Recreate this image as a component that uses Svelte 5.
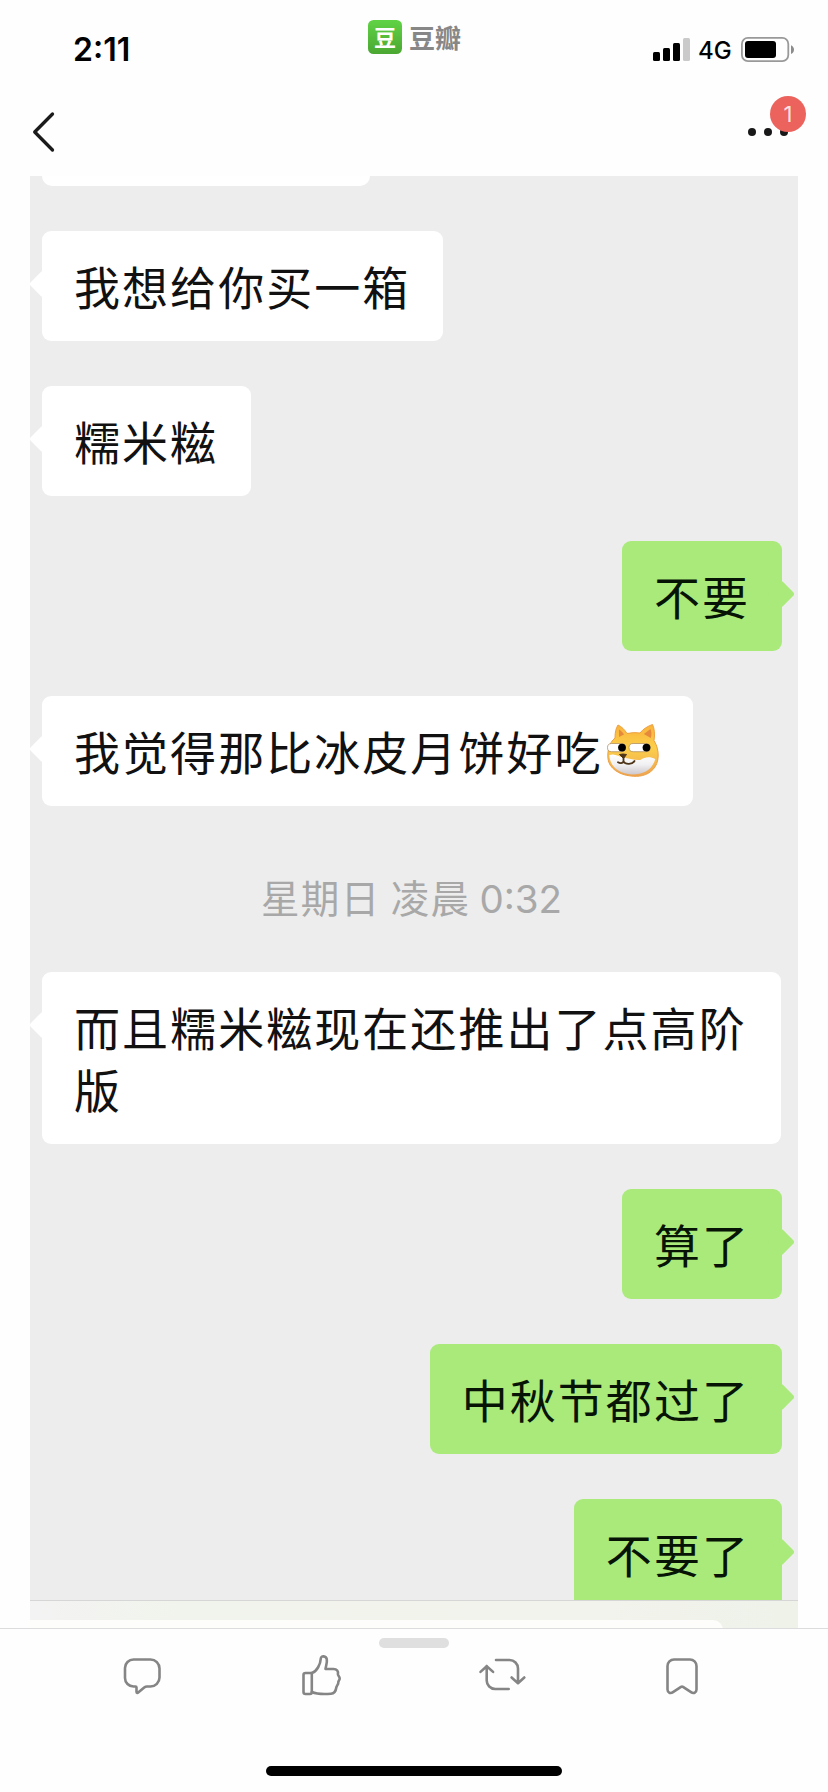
<script>
  const messages = [
    { side: "left", text: "我想给你买一箱" },
    { side: "left", text: "糯米糍" },
    { side: "right", text: "不要" },
    { side: "left", text: "我觉得那比冰皮月饼好吃", doge: true },
    { side: "time", day: "星期日 凌晨", clock: "0:32" },
    { side: "left", text: "而且糯米糍现在还推出了点高阶版" },
    { side: "right", text: "算了" },
    { side: "right", text: "中秋节都过了" },
    { side: "right", text: "不要了" },
  ];

  let unread = 1;
</script>

<div class="screen">
  <!-- Status bar -->
  <header class="status">
    <span class="clock">2:11</span>
    <div class="brand">
      <span class="logo">豆</span>
      <span class="name">豆瓣</span>
    </div>
    <div class="indicators">
      <svg class="signal" width="37" height="23" viewBox="0 0 37 23">
        <rect x="0" y="14" width="7" height="9" rx="1.5" />
        <rect x="10" y="10" width="7" height="13" rx="1.5" />
        <rect x="20" y="5" width="7" height="18" rx="1.5" />
        <rect x="30" y="0" width="7" height="23" rx="1.5" fill="#cacaca" />
      </svg>
      <span class="network">4G</span>
      <svg width="54" height="25" viewBox="0 0 54 25">
        <rect x="0.9" y="0.9" width="46.4" height="23.2" rx="6" fill="none" stroke="#999" stroke-width="1.8" />
        <rect x="4" y="4" width="31" height="17" rx="3" />
        <path d="M50 8.2c4 1.8 4 7 0 8.8z" fill="#8c8c8c" />
      </svg>
    </div>
  </header>

  <!-- Navigation -->
  <nav class="nav">
    <svg width="24" height="42" viewBox="0 0 24 42">
      <path d="M20.5 3 2.7 21l17.8 18" fill="none" stroke="#1b1b1b" stroke-width="3.3" stroke-linecap="round" stroke-linejoin="round" />
    </svg>
    <div class="more">
      <i></i><i></i><i></i>
      <span class="badge">{unread}</span>
    </div>
  </nav>

  <!-- Chat -->
  <main class="chat">
    <div class="messages">
      <div class="previous"></div>
      {#each messages as message}
        {#if message.side === "time"}
          <p class="time">{message.day}<span>{message.clock}</span></p>
        {:else}
          <div class="bubble {message.side}">
            {message.text}{#if message.doge}<svg class="doge" width="54" height="56" viewBox="0 0 54 56">
                <defs>
                  <linearGradient id="fur" x1="0" y1="0" x2="0" y2="1">
                    <stop offset="0" stop-color="#f9b23b" />
                    <stop offset="0.45" stop-color="#fcd04a" />
                    <stop offset="1" stop-color="#eea352" />
                  </linearGradient>
                  <linearGradient id="muzzle" x1="0" y1="0" x2="0" y2="1">
                    <stop offset="0" stop-color="#fff" />
                    <stop offset="0.5" stop-color="#f1f0f2" />
                    <stop offset="1" stop-color="#cdc8cc" />
                  </linearGradient>
                </defs>
                <path d="M9 15C9 9 10 5 12 2c3.500 1.500 7 5 9 8.500q7-1.500 13-.5C37 6 42 3 46.500 1.500c2 4 2.500 10 1.500 16C54 27 53.500 40 47 46.500 41 53 32 54 25 53 13 52 3 45 2 36 1.200 28 3 20 9 15z" fill="url(#fur)" stroke="#eda044" stroke-width="1" />
                <path d="M13 6.500c2 1 4 3 5 5l-5 2.500z" fill="#e58a3c" />
                <path d="M44.500 6c1.200 3 1.200 6 .3 9l-7-4z" fill="#e58a3c" />
                <path d="M3.300 32c6-2 9 1.500 14 2.500s12 3 17 2.500c5-3.500 10-3.500 15-1C46 47 38 51.500 26 51.500 13 50.500 4 44 3.300 32z" fill="url(#muzzle)" />
                <rect x="1.500" y="20.500" width="18" height="8.200" rx="4.100" fill="#fff" stroke="#a78558" stroke-width="0.700" />
                <rect x="23" y="20.500" width="21" height="8.200" rx="4.100" fill="#fff" stroke="#a78558" stroke-width="0.700" />
                <circle cx="16" cy="24.600" r="3.900" />
                <circle cx="40.500" cy="24.600" r="3.900" />
                <path d="M13.500 31.500q3.500-1 7 0L17.500 35.500z" fill="#4e3519" stroke="#4e3519" stroke-linejoin="round" />
                <path d="M17.500 35v3.500c-1 2-3.500 2-5.500.8M17.500 38.500c2 3.500 9 3 11-.5" fill="none" stroke="#4e3519" stroke-width="1.800" stroke-linecap="round" />
              </svg>{/if}
          </div>
        {/if}
      {/each}
    </div>
    <div class="composer"><div class="field"></div></div>
  </main>

  <!-- Bottom toolbar -->
  <footer class="toolbar">
    <div class="handle"></div>
    <div class="actions">
      <svg viewBox="0 0 48 48">
        <path d="M15.500 7.500h17a9 9 0 0 1 9 9v9a9 9 0 0 1-9 9h-3.500q-1.500 0-2.800 1l-6 5c-.8.700-1.700.3-1.700-.8v-4.200q0-1-1-1h-2a8.500 8.500 0 0 1-8.500-8.500v-10a8.500 8.500 0 0 1 8.500-8.500z" />
      </svg>
      <svg viewBox="0 0 48 48">
        <path d="M13.800 21H7.500q-2 0-2 2v17q0 2 2 2h4.500q1.800 0 1.800-2z" />
        <path d="M13.800 21C19 19.500 22.500 12 22.800 6.500c.2-3.200 5.400-2.700 6 .8.600 3.500-.9 6.500-1.300 9.700h8c3.500 0 5 2.300 4.400 5-.2 1.500 1.800 2.500 1.800 4.500 0 1.800-1.600 2.200-1.400 4 .1 2-1.800 3.300-2 5-.4 3-2 6-5.300 6.200-6.500.5-14.500.3-19.200-1.700" />
      </svg>
      <svg viewBox="0 0 48 48">
        <path d="M18 8h13.500a8.500 8.500 0 0 1 8.500 8.500V31M33.600 25.500 40 31.200l6.300-5.700" />
        <path d="M30.700 37H17.200a8.500 8.500 0 0 1-8.500-8.500V14M2.500 19.900l6.200-5.700 6.400 5.700" />
      </svg>
      <svg viewBox="0 0 48 48">
        <path d="M16 7.500h16a6.500 6.500 0 0 1 6.500 6.500v23.500c0 3.300-3 4.400-5.500 2.600L25 34.900q-1-.6-2 0l-8 5.200c-2.500 1.800-5.500.7-5.500-2.600V14A6.500 6.500 0 0 1 16 7.500z" />
      </svg>
    </div>
    <div class="home"></div>
  </footer>
</div>

<style>
  :global(body) {
    background: #fefefe;
  }

  .screen {
    display: flex;
    flex-direction: column;
    width: 828px;
    height: 1792px;
    overflow: hidden;
    background: #fefefe;
    font-family: "Noto Sans CJK SC", sans-serif;
    color: #111;
  }

  /* Status bar */
  .status {
    display: grid;
    grid-template-columns: 368px 1fr auto;
    height: 88px;
    color: #000;
    font-family: Inter, "Noto Sans CJK SC", sans-serif;
  }

  .clock {
    padding: 30px 0 0 73px;
    font-size: 32px;
    font-weight: 600;
    line-height: 40px;
  }

  .brand {
    display: flex;
    gap: 7px;
    padding-top: 20px;
    font-family: "Noto Sans CJK SC", sans-serif;
  }

  .logo {
    width: 34px;
    height: 34px;
    border-radius: 5.5px;
    background: linear-gradient(#60d345, #4ba732);
    color: #fff;
    font-size: 22px;
    font-weight: 700;
    line-height: 32px;
    text-align: center;
  }

  .name {
    color: #878787;
    font-size: 26px;
    font-weight: 700;
    line-height: 34px;
    margin-top: 0;
  }

  .indicators {
    display: flex;
    align-items: flex-start;
    padding: 37px 33px 0 0;
  }

  .signal {
    margin: 1px 8px 0 0;
  }

  .network {
    width: 34px;
    margin: 1px 9px 0 0;
    font-size: 24px;
    font-weight: 500;
    line-height: 25px;
    white-space: nowrap;
  }

  /* Navigation */
  .nav {
    display: flex;
    justify-content: space-between;
    align-items: center;
    height: 88px;
    padding: 0 40px 0 32px;
    box-sizing: border-box;
  }

  .more {
    position: relative;
    display: flex;
    gap: 8px;
  }

  .more i {
    width: 8px;
    height: 8px;
    border-radius: 50%;
    background: #181818;
  }

  .badge {
    position: absolute;
    top: -32px;
    right: -18px;
    width: 36px;
    height: 36px;
    border-radius: 50%;
    background: #ec625c;
    color: #fbe3e1;
    font: 22px / 36px Inter, sans-serif;
    text-align: center;
  }

  /* Chat */
  .chat {
    width: 768px;
    margin-left: 30px;
    background: #ededed;
    overflow: hidden;
  }

  .messages {
    display: flex;
    flex-direction: column;
    gap: 44.6px;
    height: 1424px;
    padding: 0 16px 0 12px;
    box-sizing: border-box;
    overflow: hidden;
  }

  .previous {
    flex: none;
    width: 328px;
    height: 10.4px;
    border-radius: 0 0 10px 10px;
    background: #fff;
  }

  .bubble {
    position: relative;
    flex: none;
    align-self: flex-start;
    max-width: 739px;
    padding: 23px 33px 25px 32px;
    box-sizing: border-box;
    border-radius: 9px;
    background: #fff;
    font-size: 46px;
    letter-spacing: 2.05px;
    line-height: 62.4px;
  }

  .right {
    align-self: flex-end;
    padding-right: 32px;
    background: #a9ea7a;
    color: #071405;
  }

  /* Bubble tail */
  .bubble::after {
    content: "";
    position: absolute;
    top: 43px;
    left: -9px;
    width: 20px;
    height: 20px;
    border-radius: 3px;
    background: inherit;
    transform: rotate(45deg);
  }

  .right::after {
    left: auto;
    right: -9px;
  }

  .doge {
    margin: 0 0 -9px 3px;
    vertical-align: baseline;
  }

  .time {
    flex: none;
    height: 76px;
    margin: 0 0 0 -1px;
    padding-top: 15px;
    box-sizing: border-box;
    color: #a8a8a8;
    font-size: 38.5px;
    letter-spacing: 1.4px;
    line-height: 60px;
    text-align: center;
  }

  .time span {
    margin-left: 9px;
    font-family: Inter, sans-serif;
    letter-spacing: 0;
  }

  .composer {
    height: 28px;
    padding-top: 19px;
    box-sizing: border-box;
    border-top: 1px solid #d6d6d6;
    background: linear-gradient(90deg, #f3f3f3, #f1f4ec 20%, #f2f3ec 75%, #eef2e9);
  }

  .field {
    width: 693px;
    height: 30px;
    border-radius: 0 10px 0 0;
    background: #fdfdfb;
  }

  /* Bottom toolbar */
  .toolbar {
    display: flex;
    flex: 1;
    flex-direction: column;
    align-items: center;
    border-top: 1px solid #dcdcde;
    background: #fefefe;
  }

  .handle {
    width: 70px;
    height: 10px;
    margin-top: 9px;
    border-radius: 5px;
    background: #dfdfdf;
  }

  .actions {
    display: grid;
    grid-template-columns: repeat(4, 180px);
    justify-items: center;
    width: 720px;
    margin: 4px 4px 0 0;
  }

  .actions svg {
    width: 48px;
    height: 48px;
    fill: none;
    stroke: #858585;
    stroke-width: 2.6;
    stroke-linecap: round;
    stroke-linejoin: round;
  }

  .home {
    width: 296px;
    height: 10px;
    margin-top: 66px;
    border-radius: 5px;
    background: #000;
  }
</style>
